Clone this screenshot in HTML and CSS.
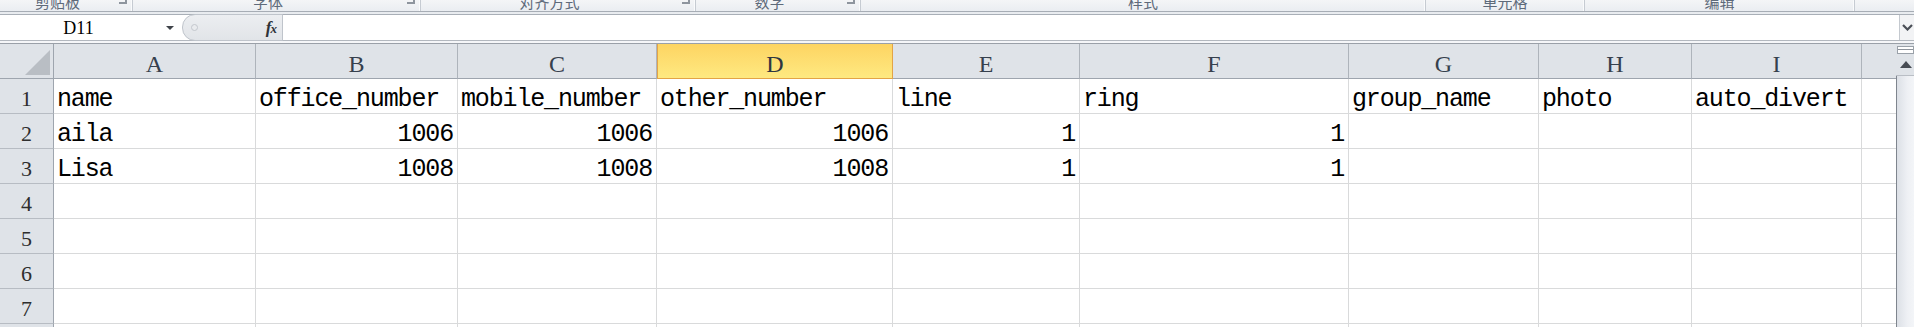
FILE: index.html
```html
<!DOCTYPE html>
<html lang="zh-CN">
<head>
<meta charset="utf-8">
<title>Sheet</title>
<link rel="stylesheet" href="styles.css">
</head>
<body>
<div class="ribbon">
  <div class="group g1"><span class="glabel">剪贴板</span><span class="launcher"></span></div>
  <div class="group g2"><span class="glabel">字体</span><span class="launcher"></span></div>
  <div class="group g3"><span class="glabel">对齐方式</span><span class="launcher"></span></div>
  <div class="group g4"><span class="glabel">数字</span><span class="launcher"></span></div>
  <div class="group g5"><span class="glabel">样式</span></div>
  <div class="group g6"><span class="glabel">单元格</span></div>
  <div class="group g7"><span class="glabel">编辑</span></div>
  <div class="group g8"></div>
</div>
<div class="fbar">
  <div class="fbox">
    <div class="namebox"><span class="nametext">D11</span><span class="ddarrow"></span></div>
    <div class="fxzone"><span class="sizer"></span><span class="fx"><i>f</i><i class="fxx">x</i></span></div>
    <div class="finput"></div>
    <div class="fexpand"><svg width="11" height="7" viewBox="0 0 11 7"><path d="M1 1 L5.5 5.5 L10 1" fill="none" stroke="#4a4f57" stroke-width="2.2"/></svg></div>
  </div>
</div>
<div class="sheet">
  <div class="grid">
    <div class="corner"><svg width="25" height="25" viewBox="0 0 25 25"><polygon points="25,0 25,25 0,25" fill="#b9bec4"/></svg></div>
    <div class="hd">A</div><div class="hd">B</div><div class="hd">C</div><div class="hd sel">D</div><div class="hd">E</div><div class="hd">F</div><div class="hd">G</div><div class="hd">H</div><div class="hd">I</div><div class="hd last"></div>

    <div class="rh">1</div>
    <div class="c">name</div><div class="c">office_number</div><div class="c">mobile_number</div><div class="c">other_number</div><div class="c">line</div><div class="c">ring</div><div class="c">group_name</div><div class="c">photo</div><div class="c">auto_divert</div><div class="c last"></div>

    <div class="rh">2</div>
    <div class="c">aila</div><div class="c num">1006</div><div class="c num">1006</div><div class="c num">1006</div><div class="c num">1</div><div class="c num">1</div><div class="c"></div><div class="c"></div><div class="c"></div><div class="c last"></div>

    <div class="rh">3</div>
    <div class="c">Lisa</div><div class="c num">1008</div><div class="c num">1008</div><div class="c num">1008</div><div class="c num">1</div><div class="c num">1</div><div class="c"></div><div class="c"></div><div class="c"></div><div class="c last"></div>

    <div class="rh">4</div>
    <div class="c"></div><div class="c"></div><div class="c"></div><div class="c"></div><div class="c"></div><div class="c"></div><div class="c"></div><div class="c"></div><div class="c"></div><div class="c last"></div>

    <div class="rh">5</div>
    <div class="c"></div><div class="c"></div><div class="c"></div><div class="c"></div><div class="c"></div><div class="c"></div><div class="c"></div><div class="c"></div><div class="c"></div><div class="c last"></div>

    <div class="rh">6</div>
    <div class="c"></div><div class="c"></div><div class="c"></div><div class="c"></div><div class="c"></div><div class="c"></div><div class="c"></div><div class="c"></div><div class="c"></div><div class="c last"></div>

    <div class="rh">7</div>
    <div class="c"></div><div class="c"></div><div class="c"></div><div class="c"></div><div class="c"></div><div class="c"></div><div class="c"></div><div class="c"></div><div class="c"></div><div class="c last"></div>

    <div class="rh">8</div>
    <div class="c"></div><div class="c"></div><div class="c"></div><div class="c"></div><div class="c"></div><div class="c"></div><div class="c"></div><div class="c"></div><div class="c"></div><div class="c last"></div>
  </div>
  <div class="vscroll">
    <div class="vtop">
      <div class="splitbox"></div>
      <div class="uparrow"><svg width="12" height="7" viewBox="0 0 12 7"><polygon points="6,0 12,7 0,7" fill="#464b53"/></svg></div>
    </div>
    <div class="track"></div>
  </div>
</div>
</body>
</html>
```

FILE: styles.css
```css
* {
  box-sizing: border-box;
  margin: 0;
  padding: 0;
}

html,
body {
  width: 1914px;
  height: 327px;
  overflow: hidden;
  background: #ffffff;
}

body {
  font-family: "Liberation Sans", sans-serif;
}

/* Ribbon (cut off at top) */
.ribbon {
  display: flex;
  height: 12px;
  overflow: hidden;
  background: linear-gradient(#f4f5f7, #eaedf1);
  border-bottom: 1px solid #a7adb5;
}

.group {
  display: flex;
  flex: none;
  height: 11px;
  border-right: 1px solid #c6cbd2;
  box-shadow: inset -1px 0 0 #fafbfc;
}

.g1 { width: 133px; }
.g2 { width: 288px; }
.g3 { width: 275px; }
.g4 { width: 165px; }
.g5 { width: 565px; }
.g6 { width: 159px; }
.g7 { width: 270px; }
.g8 { flex: 1; border-right: none; box-shadow: none; }

.glabel {
  flex: 1;
  text-align: center;
  font-family: "Noto Sans CJK SC", "Noto Sans", sans-serif;
  font-size: 15px;
  line-height: 15px;
  margin-top: -6px;
  color: #5e6a7a;
}

.launcher {
  flex: none;
  width: 8px;
  height: 4px;
  margin: 0 5px 0 4px;
  border-right: 2px solid #8e959e;
  border-bottom: 2px solid #8e959e;
}

/* Formula bar */
.fbar {
  height: 31px;
  padding: 2px 0;
  background: linear-gradient(#e8ebef, #f6f7f9);
}

.fbox {
  display: flex;
  height: 27px;
  background: #ffffff;
  border-top: 1px solid #a9afb7;
  border-bottom: 1px solid #b3b8bf;
}

.namebox {
  display: flex;
  align-items: center;
  width: 182px;
  flex: none;
}

.nametext {
  width: 157px;
  text-align: center;
  font-family: "Liberation Serif", serif;
  font-size: 18px;
  color: #000000;
  padding-top: 1px;
}

.ddarrow {
  width: 0;
  height: 0;
  margin-left: 9px;
  border-left: 4px solid transparent;
  border-right: 4px solid transparent;
  border-top: 4px solid #3e4249;
}

.fxzone {
  display: flex;
  align-items: center;
  justify-content: space-between;
  width: 101px;
  flex: none;
  margin-top: -1px;
  margin-bottom: -1px;
  padding: 0 5px 0 8px;
  background: linear-gradient(#eceef1, #e1e4e8);
  border: 1px solid #bfc4cb;
  border-radius: 13px 0 0 13px;
}

.sizer {
  width: 7px;
  height: 7px;
  border-radius: 50%;
  background: #e9ebee;
  border: 1px solid #c3c7cd;
}

.fx {
  font-family: "Liberation Serif", serif;
  font-weight: bold;
  font-size: 17px;
  color: #2f3338;
  line-height: 17px;
}

.fxx {
  font-size: 13px;
  margin-left: -1px;
}

.finput {
  flex: 1;
  background: #ffffff;
}

.fexpand {
  display: flex;
  align-items: center;
  justify-content: center;
  width: 15px;
  flex: none;
  border-left: 1px solid #c4c9cf;
  background: #f2f3f5;
}

/* Sheet */
.sheet {
  display: flex;
  border-top: 1px solid #9aa0a8;
}

.grid {
  display: grid;
  grid-template-columns: 54px 202px 202px 199px 236px 187px 269px 190px 153px 170px 34px;
  grid-auto-rows: 35px;
  width: 1896px;
  flex: none;
}

.corner {
  display: flex;
  align-items: flex-end;
  justify-content: flex-end;
  padding: 0 3px 3px 0;
  background: #dfe3e8;
  border-right: 1px solid #9ea5ae;
  border-bottom: 1px solid #9ea5ae;
}

.hd {
  background: #dfe3e8;
  border-right: 1px solid #aeb4bb;
  border-bottom: 1px solid #9ea5ae;
  font-family: "Liberation Serif", serif;
  font-size: 24px;
  line-height: 26px;
  padding-top: 7px;
  text-align: center;
  color: #36404d;
}

.hd.sel {
  background: linear-gradient(#fdd462, #fee981);
  border-left: 1px solid #e3a446;
  border-right: 1px solid #e3a446;
  border-bottom: 1px solid #e3a446;
  color: #2f3540;
}

.hd.last {
  border-right: none;
}

.rh {
  background: #dfe3e8;
  border-right: 1px solid #9ea5ae;
  border-bottom: 1px solid #b7bcc3;
  font-family: "Liberation Serif", serif;
  font-size: 22px;
  line-height: 24px;
  padding-top: 8px;
  text-align: center;
  color: #2e2e2e;
}

.c {
  border-right: 1px solid #d9dadb;
  border-bottom: 1px solid #d9dadb;
  font-family: "Liberation Mono", monospace;
  font-size: 25px;
  letter-spacing: -1.15px;
  line-height: 24px;
  padding: 9px 4px 0 3px;
  white-space: nowrap;
  color: #000000;
}

.c.num {
  text-align: right;
}

.c.last {
  border-right: none;
}

/* Vertical scrollbar */
.vscroll {
  display: flex;
  flex-direction: column;
  width: 18px;
  flex: none;
  height: 290px;
}

.vtop {
  background: #dfe3e8;
  padding-top: 2px;
}

.splitbox {
  height: 8px;
  margin-left: 1px;
  background: #ffffff;
  border: 1px solid #9aa1a9;
  box-shadow: inset 0 2px 0 #ffffff, inset 0 3px 0 #8d939b;
}

.uparrow {
  display: flex;
  align-items: center;
  justify-content: center;
  height: 22px;
  padding-left: 1px;
  border-bottom: 1px solid #b9bec5;
}

.track {
  flex: 1;
  border-left: 1px solid #7f858e;
  background: linear-gradient(to right, #dce0e6, #eef0f4 60%, #f3f5f8);
}
```
